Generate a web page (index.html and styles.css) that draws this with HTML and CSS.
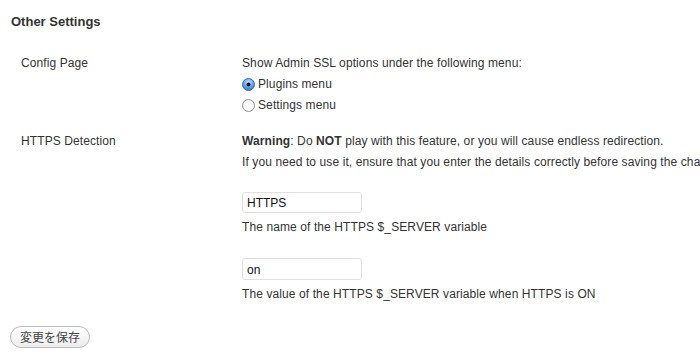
FILE: index.html
```html
<!DOCTYPE html>
<html lang="en">
<head>
    <meta charset="UTF-8">
    <title>Admin SSL - Other Settings</title>
    <link rel="stylesheet" href="styles.css">
</head>
<body>
    <div class="wrap">
        <h3>Other Settings</h3>

        <div class="form-table">
            <div class="row">
                <div class="label">Config Page</div>
                <div class="field">
                    <div class="line">Show Admin SSL options under the following menu:</div>
                    <label class="line radio">
                        <svg class="radio-icon" width="13" height="13" viewBox="0 0 13 13">
                            <defs>
                                <radialGradient id="sel" cx="50%" cy="35%" r="65%">
                                    <stop offset="0" stop-color="#d6ecff"/>
                                    <stop offset="0.6" stop-color="#5aa6f2"/>
                                    <stop offset="1" stop-color="#2a6fc9"/>
                                </radialGradient>
                            </defs>
                            <circle cx="6.5" cy="6.5" r="6" fill="url(#sel)" stroke="#3b6fb0"/>
                            <circle cx="6.5" cy="6.5" r="2" fill="#111"/>
                        </svg>
                        Plugins menu
                    </label>
                    <label class="line radio">
                        <svg class="radio-icon" width="13" height="13" viewBox="0 0 13 13">
                            <defs>
                                <linearGradient id="off" x1="0" y1="0" x2="0" y2="1">
                                    <stop offset="0" stop-color="#f4f4f4"/>
                                    <stop offset="1" stop-color="#ffffff"/>
                                </linearGradient>
                            </defs>
                            <circle cx="6.5" cy="6.5" r="6" fill="url(#off)" stroke="#8f8f8f"/>
                        </svg>
                        Settings menu
                    </label>
                </div>
            </div>

            <div class="row">
                <div class="label">HTTPS Detection</div>
                <div class="field">
                    <div class="line"><strong>Warning</strong>: Do <strong>NOT</strong> play with this feature, or you will cause endless redirection.</div>
                    <div class="line">If you need to use it, ensure that you enter the details correctly before saving the changes.</div>

                    <div class="input-group">
                        <input type="text" value="HTTPS">
                        <div class="line">The name of the HTTPS $_SERVER variable</div>
                    </div>

                    <div class="input-group">
                        <input type="text" value="on">
                        <div class="line">The value of the HTTPS $_SERVER variable when HTTPS is ON</div>
                    </div>
                </div>
            </div>
        </div>

        <div class="submit">
            <button type="submit">変更を保存</button>
        </div>
    </div>
</body>
</html>
```

FILE: styles.css
```css
body {
    margin: 0;
    padding: 0;
    background-color: #ffffff;
    font-family: "Liberation Sans", Arial, sans-serif;
    font-size: 12px;
    letter-spacing: 0.1px;
    color: #333;
    overflow: hidden;
    white-space: nowrap;
}

.wrap {
    padding: 12px 0 0 11px;
}

h3 {
    margin: 0;
    font-size: 13px;
    line-height: 20px;
    font-weight: bold;
    letter-spacing: 0;
    color: #333;
}

.form-table {
    margin-top: 21px;
    display: flex;
    flex-direction: column;
    gap: 15px;
}

.row {
    display: flex;
}

.label {
    width: 221px;
    padding-left: 10px;
    line-height: 21px;
    flex-shrink: 0;
}

.field {
    display: flex;
    flex-direction: column;
}

.line {
    line-height: 21px;
}

.radio {
    display: flex;
    align-items: center;
    gap: 3px;
    cursor: pointer;
}

.radio-icon {
    display: block;
}

.input-group {
    margin-top: 19px;
    display: flex;
    flex-direction: column;
    gap: 4px;
}

.input-group + .input-group {
    margin-top: 20px;
}

input {
    width: 120px;
    height: 21px;
    box-sizing: border-box;
    margin: 0;
    padding: 1px 4px 0;
    border: 1px solid #dfdfdf;
    border-radius: 3px;
    background-color: #ffffff;
    font-family: "Liberation Sans", Arial, sans-serif;
    font-size: 12px;
    color: #111;
}

.input-group + .input-group input {
    height: 22px;
}

.submit {
    margin-top: 21px;
}

button {
    margin-left: -1px;
    height: 22px;
    padding: 0 9px;
    border: 1px solid #bbb;
    border-radius: 11px;
    background: linear-gradient(#ffffff, #ededed);
    font-family: "Noto Sans CJK JP", sans-serif;
    font-size: 12px;
    line-height: 18px;
    letter-spacing: 0;
    color: #464646;
    cursor: pointer;
}
```
